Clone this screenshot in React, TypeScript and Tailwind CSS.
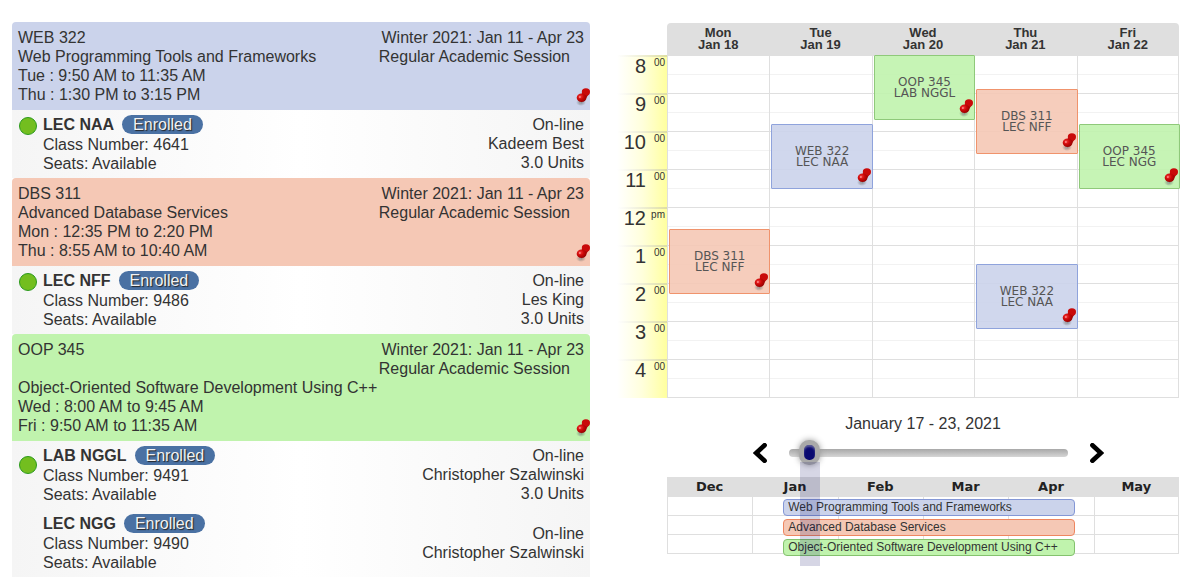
import { useState } from "react";
import clsx from "clsx";

type Tone = "blue" | "salmon" | "green";

const HEADER_BG: Record<Tone, string> = {
  blue: "bg-[#cbd3eb]",
  salmon: "bg-[#f5c8b5]",
  green: "bg-[#c0f3ad]",
};

const EVENT_TONE: Record<Tone, string> = {
  blue: "border-[#8fa3dc] bg-[#cbd3eb]/90",
  salmon: "border-[#f0936c] bg-[#f5c8b5]/90",
  green: "border-[#8fc97a] bg-[#c0f3ad]/90",
};

const BAR_TONE: Record<Tone, string> = {
  blue: "border-[#8497d6] bg-[#cbd3eb]",
  salmon: "border-[#ee8660] bg-[#f5c8b5]",
  green: "border-[#84c26e] bg-[#c0f3ad]",
};

interface Section {
  name: string;
  classNumber: string;
  teacher: string;
  units?: string;
}

interface Course {
  code: string;
  title: string;
  tone: Tone;
  times: string[];
  sections: Section[];
}

const COURSES: Course[] = [
  {
    code: "WEB 322",
    title: "Web Programming Tools and Frameworks",
    tone: "blue",
    times: ["Tue : 9:50 AM to 11:35 AM", "Thu : 1:30 PM to 3:15 PM"],
    sections: [{ name: "LEC NAA", classNumber: "4641", teacher: "Kadeem Best", units: "3.0 Units" }],
  },
  {
    code: "DBS 311",
    title: "Advanced Database Services",
    tone: "salmon",
    times: ["Mon : 12:35 PM to 2:20 PM", "Thu : 8:55 AM to 10:40 AM"],
    sections: [{ name: "LEC NFF", classNumber: "9486", teacher: "Les King", units: "3.0 Units" }],
  },
  {
    code: "OOP 345",
    title: "Object-Oriented Software Development Using C++",
    tone: "green",
    times: ["Wed : 8:00 AM to 9:45 AM", "Fri : 9:50 AM to 11:35 AM"],
    sections: [
      { name: "LAB NGGL", classNumber: "9491", teacher: "Christopher Szalwinski", units: "3.0 Units" },
      { name: "LEC NGG", classNumber: "9490", teacher: "Christopher Szalwinski" },
    ],
  },
];

interface Meeting {
  code: string;
  section: string;
  tone: Tone;
  start: number;
  length: number;
}

// Start times are minutes after 8:00.
const DAYS: { day: string; date: string; meetings: Meeting[] }[] = [
  { day: "Mon", date: "Jan 18", meetings: [{ code: "DBS 311", section: "LEC NFF", tone: "salmon", start: 275, length: 105 }] },
  { day: "Tue", date: "Jan 19", meetings: [{ code: "WEB 322", section: "LEC NAA", tone: "blue", start: 110, length: 105 }] },
  { day: "Wed", date: "Jan 20", meetings: [{ code: "OOP 345", section: "LAB NGGL", tone: "green", start: 0, length: 105 }] },
  {
    day: "Thu",
    date: "Jan 21",
    meetings: [
      { code: "DBS 311", section: "LEC NFF", tone: "salmon", start: 55, length: 105 },
      { code: "WEB 322", section: "LEC NAA", tone: "blue", start: 330, length: 105 },
    ],
  },
  { day: "Fri", date: "Jan 22", meetings: [{ code: "OOP 345", section: "LEC NGG", tone: "green", start: 110, length: 105 }] },
];

const HOURS = ["8", "9", "10", "11", "12", "1", "2", "3", "4"];
const MONTHS = ["Dec", "Jan", "Feb", "Mar", "Apr", "May"];
const HOUR_HEIGHT = 38;

function Pin() {
  return (
    <svg viewBox="0 0 14 18" className="h-[18px] w-[14px]" aria-hidden="true">
      <defs>
        <radialGradient id="pinHead" cx="0.35" cy="0.35" r="0.75">
          <stop offset="0" stopColor="#f53a3a" />
          <stop offset="0.45" stopColor="#cc0808" />
          <stop offset="1" stopColor="#8a0000" />
        </radialGradient>
        <radialGradient id="pinShade">
          <stop offset="0" stopColor="#555" stopOpacity="0.6" />
          <stop offset="1" stopColor="#555" stopOpacity="0" />
        </radialGradient>
      </defs>
      <ellipse cx="5" cy="14.4" rx="5" ry="3.6" fill="url(#pinShade)" />
      <path d="M4.6 13 3.8 16.5" stroke="#aaa" strokeWidth="0.8" />
      <path d="M4.5 7.5 7.5 3.5 12.5 6.5 9.5 11Z" fill="#a80606" />
      <ellipse cx="9.9" cy="3.9" rx="4.1" ry="3.6" fill="#c90a0a" />
      <ellipse cx="5.6" cy="9.8" rx="4.9" ry="4.2" fill="url(#pinHead)" />
      <circle cx="3.9" cy="9" r="0.9" fill="#ff8a8a" />
    </svg>
  );
}

function CourseCard({ course }: { course: Course }) {
  return (
    <section>
      <header className={clsx("relative rounded-t-[4px] px-1.5 py-1.5", HEADER_BG[course.tone])}>
        <div className="float-right pl-3 text-right">
          <div>Winter 2021: Jan 11 - Apr 23</div>
          <div className="pr-3.5">Regular Academic Session</div>
        </div>
        <h2>{course.code}</h2>
        <div>
          <span className="inline-block align-top whitespace-nowrap">{course.title}</span>
        </div>
        {course.times.map((time) => (
          <div key={time}>{time}</div>
        ))}
        <span className="absolute right-0 bottom-1">
          <Pin />
        </span>
      </header>
      <div className="flex bg-linear-to-r from-[#f5f5f5] via-white to-[#f5f5f5] px-1.5 py-[5px]">
        <div className={clsx("w-[25px] shrink-0 pl-px", course.sections.length > 1 ? "pt-2.5" : "pt-0.5")}>
          <div className="size-[18px] rounded-full border border-[#2b9a1c] bg-[#73be1f]" />
        </div>
        <div className="flex flex-1 flex-col gap-2.5">
          {course.sections.map((section) => (
            <div key={section.name} className="flex items-center justify-between">
              <div>
                <div className="flex h-5 items-start gap-2">
                  <h3 className="font-bold">{section.name}</h3>
                  <span className="rounded-full bg-[#4a71a3] px-[11px] text-[#f2f2f2] [text-shadow:1px_1px_1px_#222]">
                    Enrolled
                  </span>
                </div>
                <div>Class Number: {section.classNumber}</div>
                <div>Seats: Available</div>
              </div>
              <div className="pb-px text-right">
                <div>On-line</div>
                <div>{section.teacher}</div>
                {section.units && <div>{section.units}</div>}
              </div>
            </div>
          ))}
        </div>
      </div>
    </section>
  );
}

function WeekGrid() {
  return (
    <div className="relative">
      <table className="w-full table-fixed border-separate border-spacing-0">
        <thead>
          <tr className="h-8 text-[13px] leading-3">
            <td className="w-[50px] p-0" />
            {DAYS.map(({ day, date }) => (
              <th
                key={day}
                scope="col"
                className="bg-[#dfdfdf] p-0 font-bold first-of-type:rounded-tl-[4px] last:rounded-tr-[4px]"
              >
                {day}
                <br />
                {date}
              </th>
            ))}
          </tr>
        </thead>
        <tbody>
          {HOURS.map((hour) => (
            <tr key={hour} className="group h-[38px] last:h-[39px]">
              <th scope="row" className="bg-linear-to-r from-white via-[#ffffdc] to-[#ffff9e] p-0 align-top font-normal">
                <div className="h-0.5 bg-linear-to-r from-white to-[#c9c9a4] opacity-60" />
                <div className="flex justify-end gap-[7px] pr-[2px]">
                  <span className="text-[20px] leading-[19px]">{hour}</span>
                  <span className="w-3 text-right text-[10px] leading-3">
                    <span className="float-right">{hour === "12" ? "pm" : "00"}</span>
                  </span>
                </div>
              </th>
              {DAYS.map(({ day }) => (
                <td
                  key={day}
                  className="border-t border-l border-[#dfdfdf] p-0 align-top group-last:border-b last:border-r"
                >
                  <div className="h-[19px] border-b border-[#f2f2f2]" />
                </td>
              ))}
            </tr>
          ))}
        </tbody>
      </table>
      <div className="absolute top-8 right-0 bottom-0 left-[50px] grid grid-cols-5">
        {DAYS.map(({ day, meetings }) => (
          <div key={day} className="relative">
            {meetings.map((m) => (
              <div
                key={m.start}
                className={clsx(
                  "absolute -right-px left-[2px] flex items-center justify-center rounded-[1px] border text-center font-['DejaVu_Sans',Verdana,sans-serif] text-[12px] leading-[11px] text-[#555]",
                  EVENT_TONE[m.tone],
                )}
                style={{
                  top: Math.floor((m.start * HOUR_HEIGHT) / 60),
                  height: Math.floor((m.length * HOUR_HEIGHT) / 60) - 1,
                }}
              >
                <div>
                  {m.code}
                  <br />
                  {m.section}
                </div>
                <span className="absolute right-px bottom-0.5">
                  <Pin />
                </span>
              </div>
            ))}
          </div>
        ))}
      </div>
    </div>
  );
}

function Chevron({ flip }: { flip?: boolean }) {
  return (
    <svg viewBox="0 0 14 20" className="h-5 w-[14px]" aria-hidden="true">
      <path
        d={flip ? "M2.4 2.2 10.8 10 2.4 17.8" : "M11.6 2.2 3.2 10 11.6 17.8"}
        fill="none"
        stroke="#000"
        strokeWidth="4.6"
        strokeLinecap="round"
      />
    </svg>
  );
}

function Timeline() {
  const [week, setWeek] = useState(1);
  return (
    <div className="pl-[50px]">
      <p className="mt-[13px] text-center leading-[25px]">January 17 - 23, 2021</p>
      <div className="mt-1 flex h-[25px] items-center pr-[75px] pl-[86px]">
        <button type="button" aria-label="Previous week" onClick={() => setWeek(Math.max(0, week - 1))}>
          <Chevron />
        </button>
        <input
          type="range"
          aria-label="Week"
          min={0}
          max={26}
          value={week}
          onChange={(e) => setWeek(Number(e.target.value))}
          className="mx-[22px] h-[25px] w-0 flex-1 appearance-none bg-transparent [&::-webkit-slider-runnable-track]:h-2 [&::-webkit-slider-runnable-track]:rounded-full [&::-webkit-slider-runnable-track]:bg-linear-to-b [&::-webkit-slider-runnable-track]:from-[#a8a8a8] [&::-webkit-slider-runnable-track]:to-[#d6d6d6] [&::-webkit-slider-thumb]:mt-[-9px] [&::-webkit-slider-thumb]:h-[25px] [&::-webkit-slider-thumb]:w-[21px] [&::-webkit-slider-thumb]:appearance-none [&::-webkit-slider-thumb]:rounded-[10px] [&::-webkit-slider-thumb]:border-5 [&::-webkit-slider-thumb]:border-[#a9a9a9] [&::-webkit-slider-thumb]:bg-[#0a0a70] [&::-webkit-slider-thumb]:shadow-[0_0_6px_#999,inset_0_2px_2px_#5a5a9a]"
        />
        <button type="button" aria-label="Next week" onClick={() => setWeek(Math.min(26, week + 1))}>
          <Chevron flip />
        </button>
      </div>
      <div className="relative mt-3">
        <table className="w-full table-fixed border-separate border-spacing-0">
          <thead>
            <tr className="h-5 bg-[#dfdfdf] font-['DejaVu_Sans',Verdana,sans-serif] text-[13px] leading-4 text-[#222]">
              {MONTHS.map((month) => (
                <th key={month} scope="col" className="p-0 font-bold">
                  {month}
                </th>
              ))}
            </tr>
          </thead>
          <tbody>
            {COURSES.map(({ code }) => (
              <tr key={code} className="h-[19px]">
                {MONTHS.map((month) => (
                  <td key={month} className="border-b border-l border-[#dfdfdf] p-0 last:border-r" />
                ))}
              </tr>
            ))}
          </tbody>
        </table>
        <div className="absolute top-[22px] left-[22.7%] flex w-[57%] flex-col gap-[3px]">
          {COURSES.map(({ code, title, tone }) => (
            <div
              key={code}
              className={clsx("rounded-[4px] border pl-1 text-[12px] leading-[15px] whitespace-nowrap", BAR_TONE[tone])}
            >
              {title}
            </div>
          ))}
        </div>
        <div className="absolute -top-[15px] left-[26%] h-[104px] w-5 bg-[#000060]/16" />
      </div>
    </div>
  );
}

export default function App() {
  return (
    <main className="grid grid-cols-[578fr_562fr] items-start gap-[27px] bg-white pt-[22px] pr-[15px] pl-3 font-['Liberation_Sans',Arial,sans-serif] text-[16px] leading-[19px] text-[#333]">
      <div>
        {COURSES.map((course) => (
          <CourseCard key={course.code} course={course} />
        ))}
      </div>
      <div className="pt-px">
        <WeekGrid />
        <Timeline />
      </div>
    </main>
  );
}
